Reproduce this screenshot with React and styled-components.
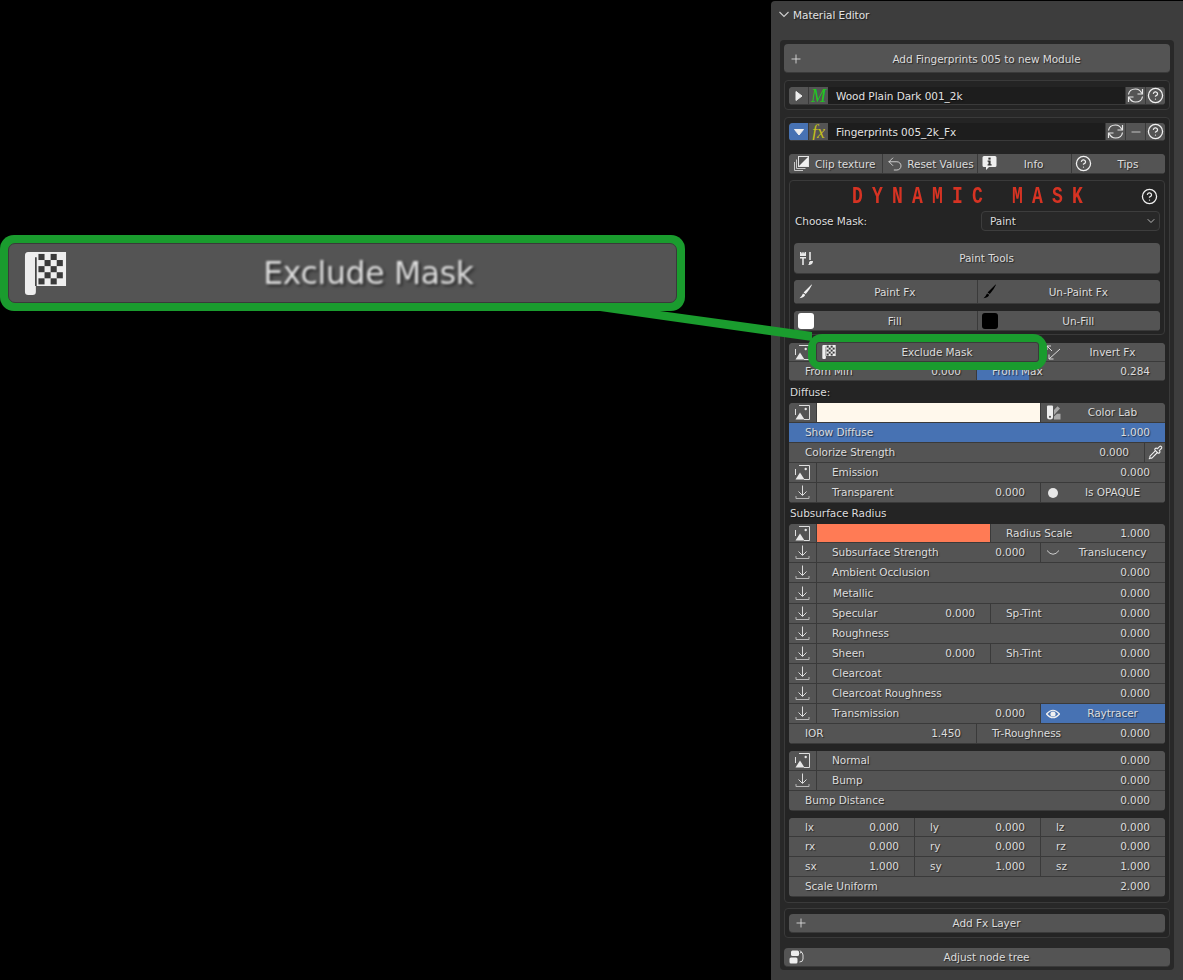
import React from "react";
import styled, { createGlobalStyle } from "styled-components";
import { ChevronDown, CircleHelp, Undo2, Pipette, Plus, Minus } from "lucide-react";

const GlobalStyle = createGlobalStyle`
  html, body {
    margin: 0;
    background: #000;
    height: 980px;
    overflow: hidden;
  }
  * { box-sizing: border-box; }
`;

const Page = styled.div`
  position: relative;
  display: flex;
  justify-content: flex-end;
  width: 1183px;
  height: 980px;
  background: #000;
  font-family: "DejaVu Sans", "Noto Sans", sans-serif;
  font-size: 10.5px;
  letter-spacing: -0.05px;
  color: #dcdcdc;
  text-shadow: 1px 1px 1px rgba(0, 0, 0, 0.55);
`;

const Panel = styled.div`
  width: 412px;
  height: 980px;
  margin-top: 1px;
  background: #3d3d3d;
  border-radius: 4px 0 0 0;
`;

const PanelHeader = styled.div`
  display: flex;
  align-items: center;
  height: 39px;
  padding: 0 6px 11px 8px;
  color: #e2e2e2;
`;

const Grip = styled.div`
  margin: -4px 0 0 auto;
  width: 11px;
  height: 5px;
  background-image: radial-gradient(circle, #858585 0.5px, transparent 0.6px);
  background-size: 2px 2px;
`;

const Inner = styled.div`
  margin: 0 9px;
  height: 930px;
  padding: 4px;
  background: #282828;
  border-radius: 4px;
`;

const Box = styled.div`
  margin-top: ${(p) => p.$top}px;
  padding: ${(p) => p.$pad || "5px 4px"};
  border: 1px solid #3a3a3a;
  border-radius: 4px;
  background: #242424;
`;

const Group = styled.div`
  margin-top: ${(p) => p.$top || 0}px;
  border-radius: 4px;
  overflow: hidden;
`;

/* 20px rows sit their text a pixel higher than a plain centre would */
const Row = styled.div`
  --lift: ${(p) => ((p.$h || 20) === 20 && !p.$flat ? 1 : 0)}px;
  display: flex;
  height: ${(p) => p.$h || 20}px;
  background: #545454;
  border-bottom: 1px solid #3a3a3a;
`;

const Cell = styled.div`
  flex: ${(p) => (p.$w ? `0 0 ${p.$w}px` : "1 1 0")};
  display: flex;
  align-items: center;
  justify-content: space-between;
  min-width: 0;
  padding: 0 15px var(--lift, 0) ${(p) => p.$pad || 15}px;
  white-space: nowrap;
  background: ${(p) =>
    p.$fill
      ? `linear-gradient(to right, #4772b3 ${p.$fill}px, #545454 ${p.$fill}px)`
      : p.$on
      ? "#4772b3"
      : "#545454"};
  border-left: 1px solid #3a3a3a;
  &:first-child {
    border-left: 0;
  }
`;

const IconCell = styled.div`
  flex: 0 0 ${(p) => p.$w || 27}px;
  display: flex;
  align-items: center;
  justify-content: center;
  overflow: hidden;
  background: ${(p) => (p.$on ? "#4772b3" : "#545454")};
  border-left: 1px solid #3a3a3a;
  color: #e6e6e6;
  &:first-child {
    border-left: 0;
  }
`;

const Swatch = styled.div`
  flex: 0 0 ${(p) => p.$w}px;
  background: ${(p) => p.$color};
  border-left: 1px solid #3a3a3a;
`;

const Slot = styled.span`
  flex: 0 0 24px;
  display: flex;
  align-items: center;
  justify-content: center;
  color: #e6e6e6;
`;

const Label = styled.span`
  flex: 1;
  margin-bottom: var(--lift, 0);
  text-align: center;
  padding-right: 5px;
  white-space: nowrap;
`;

const ToolCell = styled.div`
  flex: 1 1 0;
  display: flex;
  align-items: center;
  min-width: 0;
  background: ${(p) => (p.$on ? "#4772b3" : "#545454")};
  border-left: 1px solid #3a3a3a;
  &:first-child {
    border-left: 0;
  }
`;

const Wide = styled.div`
  display: flex;
  align-items: center;
  height: ${(p) => p.$h || 19}px;
  margin-top: ${(p) => p.$top || 0}px;
  background: #545454;
  border-bottom: 1px solid #3a3a3a;
  border-radius: 4px;
`;

const TopButton = styled(Wide)`
  padding-top: 1px;
`;

const NameField = styled.div`
  flex: 1;
  display: flex;
  align-items: center;
  padding-left: 8px;
  background: #1d1d1d;
  color: #e2e2e2;
`;

const Script = styled.span`
  font-family: "Liberation Serif", serif;
  font-style: italic;
  font-size: ${(p) => p.$size}px;
  letter-spacing: 0;
  line-height: 1;
  color: ${(p) => p.$color};
  text-shadow: none;
`;

const MaskBox = styled.div`
  margin-top: 6px;
  height: 155px;
  padding: 0 4px;
  border: 1px solid #3a3a3a;
  border-radius: 4px;
  background: #242424;
`;

const TitleRow = styled.div`
  position: relative;
  display: flex;
  align-items: center;
  height: 30px;
`;

const Title = styled.span`
  display: inline-block;
  margin-left: 58px;
  font-family: "Liberation Mono", monospace;
  font-weight: 700;
  font-size: 24px;
  letter-spacing: 12.27px;
  white-space: pre;
  color: #d63323;
  text-shadow: none;
  transform: scaleX(0.75);
  transform-origin: left center;
`;

const TitleHelp = styled.span`
  position: absolute;
  right: 2px;
  top: 7px;
  display: flex;
`;

const ChooseRow = styled.div`
  display: flex;
  align-items: center;
  justify-content: space-between;
  height: 20px;
  padding-left: 1px;
`;

const Select = styled.div`
  display: flex;
  align-items: center;
  justify-content: space-between;
  width: 179px;
  height: 20px;
  padding: 0 2px 0 8px;
  background: #282828;
  border: 1px solid #3d3d3d;
  border-radius: 4px;
`;

const SectionLabel = styled.div`
  display: flex;
  align-items: center;
  height: ${(p) => p.$h}px;
  padding: 0 0 ${(p) => p.$lift || 0}px 1px;
`;

const FillSquare = styled.span`
  width: 16px;
  height: 16px;
  border-radius: 3px;
  background: ${(p) => p.$color};
`;

const Dot = styled.span`
  width: 10px;
  height: 10px;
  border-radius: 50%;
  background: #e6e6e6;
`;

const Overlay = styled.svg`
  position: absolute;
  left: 0;
  top: 0;
  pointer-events: none;
`;

const Callout = styled.div`
  position: absolute;
  left: ${(p) => p.$x}px;
  top: ${(p) => p.$y}px;
  width: ${(p) => p.$w}px;
  height: ${(p) => p.$h}px;
  padding: ${(p) => p.$edge}px;
  background: #1a9c2e;
  border-radius: ${(p) => p.$edge + 6}px;
`;

const MaskButton = styled.div`
  display: flex;
  align-items: center;
  height: 100%;
  background: #545454;
  border: 1px solid #3a3a3a;
  border-radius: ${(p) => (p.$big ? 7 : 3)}px;
`;

const BigSlot = styled.span`
  flex: 0 0 72px;
  display: flex;
  justify-content: center;
  filter: blur(0.7px);
`;

const BigLabel = styled.span`
  flex: 1;
  margin-left: -20px;
  text-align: center;
  font-size: 31.5px;
  letter-spacing: -0.35px;
  color: #dedede;
  filter: blur(0.8px);
  text-shadow: 2px 2px 3px rgba(0, 0, 0, 0.6);
`;

const CollapseIcon = () => (
  <svg width="14" height="8" viewBox="0 0 14 8" fill="none" stroke="#cfcfcf" strokeWidth="1.1">
    <path d="M0.5 1 L5 5.5 L9.5 1" />
  </svg>
);

const Triangle = ({ down }) => (
  <svg width="10" height="10" viewBox="0 0 10 10">
    <path
      d={down ? "M0.5 2.5 H9.5 L5 8 Z" : "M2 0.5 V9.5 L8 5 Z"}
      fill="#eeeeee"
      stroke="#eeeeee"
      strokeLinejoin="round"
    />
  </svg>
);

const RefreshIcon = () => (
  <svg width="17" height="17" viewBox="0 0 17 17" fill="none" stroke="#e8e8e8" strokeWidth="1.2">
    <path d="M1.5 7.5 C2 4 5 2 8.5 2 C11 2 13.5 3.5 14.8 6.5" />
    <path d="M15.5 2 V7 H10.5" />
    <path d="M15.5 9.5 C15 13 12 15 8.5 15 C6 15 3.5 13.5 2.2 10.5" />
    <path d="M1.5 15 V10 H6.5" />
  </svg>
);

const ImageIcon = () => (
  <svg width="15" height="15" viewBox="0 0 15 15" fill="none">
    <path d="M4 0.5 H14.5 V14.5 H9" stroke="#dedede" />
    <path d="M0.5 4 V10" stroke="#dedede" />
    <path d="M0.5 14.5 L5 7.5 L9.5 14.5 Z" fill="#e8e8e8" />
    <circle cx="10.7" cy="4" r="1.2" fill="#e8e8e8" />
  </svg>
);

const ImportIcon = () => (
  <svg width="15" height="15" viewBox="0 0 15 15" fill="none" stroke="#dcdcdc">
    <path d="M7.5 0.5 V10 M3.5 6.5 L7.5 10.5 L11.5 6.5" />
    <path d="M1 11 V13.5 H14 V11" stroke="#b8b8b8" />
  </svg>
);

const ClipIcon = () => (
  <svg width="15" height="15" viewBox="0 0 15 15" fill="none">
    <rect x="4.5" y="0.5" width="10" height="10" fill="#545454" stroke="#e4e4e4" />
    <path d="M5 10 L14 1 V10 Z" fill="#f0f0f0" />
    <path d="M2.5 3.5 V12.5 H11.5 M0.5 6 V14.5 H9" stroke="#c8c8c8" />
  </svg>
);

const InfoIcon = () => (
  <svg width="15" height="17" viewBox="0 0 15 17">
    <path d="M2 1 H13 Q14.5 1 14.5 2.5 V10.5 Q14.5 12 13 12 H7 L4 15 V12 H2 Q0.5 12 0.5 10.5 V2.5 Q0.5 1 2 1 Z" fill="#eeeeee" />
    <rect x="6.4" y="2.6" width="2.2" height="2" fill="#333" />
    <path d="M5.6 5.6 H8.6 V9.2 H9.6 V10.4 H5.6 V9.2 H6.5 V6.8 H5.6 Z" fill="#333" />
  </svg>
);

const ToolsIcon = () => (
  <svg width="15" height="15" viewBox="0 0 15 15" fill="#e8e8e8">
    <path d="M1 1 H2.4 V2.2 H3.4 V1 H4.6 V2.2 H5.6 V1 H7 V5 H1 Z" />
    <path d="M1 6 H7 V7.4 H4.8 V14 H3.2 V7.4 H1 Z" />
    <rect x="10.2" y="1" width="1.6" height="8" />
    <path d="M11 10 H14 Q14 13.5 10.5 14 H9 Q10.5 13 10 11.5 Z" />
  </svg>
);

const BrushIcon = ({ color }) => (
  <svg width="14" height="15" viewBox="0 0 14 15" fill={color}>
    <path d="M12.6 0.5 L13 0.8 Q11 5.5 6.8 10 L4.6 8.6 Q9 4 12.6 0.5 Z" />
    <path d="M4 9.4 L6.2 10.8 Q5.5 13.5 0.5 14.2 Q2.8 12.4 4 9.4 Z" />
  </svg>
);

const InvertIcon = () => (
  <svg width="15" height="15" viewBox="0 0 15 15" fill="none" stroke="#dcdcdc">
    <path d="M1 5 V1 H5 M1 1 L6 6" />
    <path d="M14 4 L3 14 M3 9.5 V14 H7.5" />
  </svg>
);

const ColorLabIcon = () => (
  <svg width="15" height="15" viewBox="0 0 15 15">
    <path d="M8 5 L11.5 1.2 L14 3.6 L8 10 Z" fill="#a8a8a8" />
    <path d="M8 14.5 V11.5 L11 8.8 H14.5 V14.5 Z" fill="#a8a8a8" />
    <path d="M1 1.5 Q1 0.5 2 0.5 H6 Q7 0.5 7 1.5 V12 Q7 14.5 4 14.5 Q1 14.5 1 12 Z" fill="#eeeeee" />
    <circle cx="4" cy="11.8" r="1.1" fill="#545454" />
  </svg>
);

const ArcIcon = () => (
  <svg width="14" height="8" viewBox="0 0 14 8" fill="none" stroke="#cfcfcf">
    <path d="M1 1.5 Q7 9 13 1.5" />
  </svg>
);

const EyeIcon = () => (
  <svg width="14" height="10" viewBox="0 0 14 10">
    <path d="M0.5 5 Q7 -2.5 13.5 5 Q7 12.5 0.5 5 Z" fill="none" stroke="#f0f0f0" strokeWidth="1.2" />
    <circle cx="7" cy="5" r="2.6" fill="#f0f0f0" />
  </svg>
);

const NodeTreeIcon = () => (
  <svg width="15" height="14" viewBox="0 0 15 14" fill="none">
    <rect x="2" y="0.5" width="8" height="5.5" rx="1.5" fill="#eeeeee" />
    <rect x="0.5" y="7.5" width="8" height="6" rx="1.5" fill="#eeeeee" />
    <path d="M11 2 Q14 2 14 5 V9 Q14 12 10.5 12" stroke="#dcdcdc" />
    <path d="M11 0.5 L12.5 2 L11 3.5" stroke="#dcdcdc" />
  </svg>
);

const checker = [];
for (let y = 0; y < 5; y++) {
  for (let x = 0; x < 4; x++) {
    if ((x + y) % 2 === 0) checker.push([5.2 + x * 1.9, 1 + y * 1.9]);
  }
}

const ExcludeIcon = ({ size }) => (
  <svg width={size} height={size} viewBox="1 0.4 12.8 13.4">
    <path d="M1 1.5 Q1 0.4 2 0.4 H13.8 V11 H4.4 V12.8 Q4.4 13.8 3.4 13.8 H2 Q1 13.8 1 12.8 Z" fill="#eeeeee" />
    <path d="M4.4 2 V11" stroke="#3a3a3a" strokeWidth="0.5" />
    {checker.map(([x, y]) => (
      <rect key={`${x}-${y}`} x={x} y={y} width="1.9" height="1.9" fill="#3a3a3a" />
    ))}
  </svg>
);

const Help = () => <CircleHelp size={17} strokeWidth={1.8} color="#f0f0f0" />;

const Pair = ({ label, value, ...rest }) => (
  <Cell {...rest}>
    <span>{label}</span>
    <span>{value}</span>
  </Cell>
);

const Tool = ({ icon, children, ...rest }) => (
  <ToolCell {...rest}>
    <Slot>{icon}</Slot>
    <Label>{children}</Label>
  </ToolCell>
);

const ChannelRow = ({ icon, label, value, pad, h, flat }) => (
  <Row $h={h} $flat={flat}>
    <IconCell>{icon}</IconCell>
    <Pair label={label} value={value} $pad={pad} />
  </Row>
);

const SplitRow = ({ label, value, tint, tintValue }) => (
  <Row>
    <IconCell>
      <ImportIcon />
    </IconCell>
    <Pair $w={174} label={label} value={value} />
    <Pair label={tint} value={tintValue} />
  </Row>
);

const TransformRow = ({ h, values }) => (
  <Row $h={h}>
    {values.map(([label, value], i) => (
      <Pair key={label} $w={i === 2 ? undefined : i === 0 ? 125 : 126} $pad={i === 0 ? 16 : 15} label={label} value={value} />
    ))}
  </Row>
);

export default function App() {
  return (
    <Page>
      <GlobalStyle />
      <Panel>
        <PanelHeader>
          <CollapseIcon />
          <span>Material Editor</span>
          <Grip />
        </PanelHeader>
        <Inner>
          <TopButton $h={29}>
            <Slot>
              <Plus size={14} strokeWidth={1.4} />
            </Slot>
            <Label>Add Fingerprints 005 to new Module</Label>
          </TopButton>

          <Box $top={7} $pad="6px 4px 4px">
            <Group>
              <Row $h={18}>
                <IconCell $w={19}>
                  <Triangle />
                </IconCell>
                <IconCell $w={20}>
                  <Script $size={18} $color="#1fc71f">M</Script>
                </IconCell>
                <NameField>Wood Plain Dark 001_2k</NameField>
                <IconCell $w={20}>
                  <RefreshIcon />
                </IconCell>
                <IconCell $w={20}>
                  <Help />
                </IconCell>
              </Row>
            </Group>
          </Box>

          <Box $top={7}>
            <Group>
              <Row $h={18}>
                <IconCell $w={19} $on>
                  <Triangle down />
                </IconCell>
                <IconCell $w={20}>
                  <Script $size={18} $color="#c4bf1a">fx</Script>
                </IconCell>
                <NameField>Fingerprints 005_2k_Fx</NameField>
                <IconCell $w={20}>
                  <RefreshIcon />
                </IconCell>
                <IconCell $w={20}>
                  <Minus size={14} strokeWidth={1.3} />
                </IconCell>
                <IconCell $w={20}>
                  <Help />
                </IconCell>
              </Row>
            </Group>

            <Group $top={13}>
              <Row $h={20} $flat>
                <Tool icon={<ClipIcon />}>Clip texture</Tool>
                <Tool icon={<Undo2 size={18} strokeWidth={1.1} />}>Reset Values</Tool>
                <Tool icon={<InfoIcon />}>Info</Tool>
                <Tool icon={<Help />}>Tips</Tool>
              </Row>
            </Group>

            <MaskBox>
              <TitleRow>
                <Title>DYNAMIC MASK</Title>
                <TitleHelp>
                  <Help />
                </TitleHelp>
              </TitleRow>
              <ChooseRow>
                <span>Choose Mask:</span>
                <Select>
                  <span>Paint</span>
                  <ChevronDown size={12} strokeWidth={1.6} />
                </Select>
              </ChooseRow>
              <Wide $h={31} $top={12}>
                <Slot>
                  <ToolsIcon />
                </Slot>
                <Label>Paint Tools</Label>
              </Wide>
              <Group $top={6}>
                <Row $h={24}>
                  <Tool icon={<BrushIcon color="#f2f2f2" />}>Paint Fx</Tool>
                  <Tool icon={<BrushIcon color="#000" />}>Un-Paint Fx</Tool>
                </Row>
              </Group>
              <Group $top={7}>
                <Row $h={20} $flat>
                  <Tool icon={<FillSquare $color="#fff" />}>Fill</Tool>
                  <Tool icon={<FillSquare $color="#000" />}>Un-Fill</Tool>
                </Row>
              </Group>
            </MaskBox>

            <Group $top={8}>
              <Row $h={19}>
                <IconCell>
                  <ImageIcon />
                </IconCell>
                <Cell $w={224} />
                <Tool icon={<InvertIcon />}>Invert Fx</Tool>
              </Row>
              <Row $h={19}>
                <Pair $w={187} $pad={16} label="From Min" value="0.000" />
                <Pair $fill={52} label="From Max" value="0.284" />
              </Row>
            </Group>

            <SectionLabel $h={22}>Diffuse:</SectionLabel>
            <Group>
              <Row>
                <IconCell>
                  <ImageIcon />
                </IconCell>
                <Swatch $w={224} $color="#fff8ec" />
                <Tool icon={<ColorLabIcon />}>Color Lab</Tool>
              </Row>
              <Row>
                <Pair $on $pad={16} label="Show Diffuse" value="1.000" />
              </Row>
              <Row>
                <Pair $w={355} $pad={16} label="Colorize Strength" value="0.000" />
                <IconCell $w={21}>
                  <Pipette size={15} strokeWidth={1.7} color="#eeeeee" />
                </IconCell>
              </Row>
              <ChannelRow icon={<ImageIcon />} label="Emission" value="0.000" />
              <Row>
                <IconCell>
                  <ImportIcon />
                </IconCell>
                <Pair $w={224} label="Transparent" value="0.000" />
                <Tool icon={<Dot />}>Is OPAQUE</Tool>
              </Row>
            </Group>

            <SectionLabel $h={21} $lift={2}>Subsurface Radius</SectionLabel>
            <Group>
              <Row $h={19}>
                <IconCell>
                  <ImageIcon />
                </IconCell>
                <Swatch $w={174} $color="#ff7b55" />
                <Pair label="Radius Scale" value="1.000" />
              </Row>
              <Row>
                <IconCell>
                  <ImportIcon />
                </IconCell>
                <Pair $w={224} label="Subsurface Strength" value="0.000" />
                <Tool icon={<ArcIcon />}>Translucency</Tool>
              </Row>
              <ChannelRow icon={<ImportIcon />} label="Ambient Occlusion" value="0.000" />
              <ChannelRow icon={<ImportIcon />} label="Metallic" value="0.000" pad={16} h={21} />
              <SplitRow label="Specular" value="0.000" tint="Sp-Tint" tintValue="0.000" />
              <ChannelRow icon={<ImportIcon />} label="Roughness" value="0.000" />
              <SplitRow label="Sheen" value="0.000" tint="Sh-Tint" tintValue="0.000" />
              <ChannelRow icon={<ImportIcon />} label="Clearcoat" value="0.000" />
              <ChannelRow icon={<ImportIcon />} label="Clearcoat Roughness" value="0.000" />
              <Row>
                <IconCell>
                  <ImportIcon />
                </IconCell>
                <Pair $w={224} label="Transmission" value="0.000" />
                <Tool $on icon={<EyeIcon />}>Raytracer</Tool>
              </Row>
              <Row>
                <Pair $w={187} $pad={16} label="IOR" value="1.450" />
                <Pair label="Tr-Roughness" value="0.000" />
              </Row>
            </Group>

            <Group $top={7}>
              <ChannelRow icon={<ImageIcon />} label="Normal" value="0.000" />
              <ChannelRow icon={<ImportIcon />} label="Bump" value="0.000" />
              <Row>
                <Pair $pad={16} label="Bump Distance" value="0.000" />
              </Row>
            </Group>

            <Group $top={7}>
              <TransformRow h={19} values={[["lx", "0.000"], ["ly", "0.000"], ["lz", "0.000"]]} />
              <TransformRow values={[["rx", "0.000"], ["ry", "0.000"], ["rz", "0.000"]]} />
              <TransformRow values={[["sx", "1.000"], ["sy", "1.000"], ["sz", "1.000"]]} />
              <Row>
                <Pair $pad={16} label="Scale Uniform" value="2.000" />
              </Row>
            </Group>
          </Box>

          <Box $top={5} $pad="5px 4px 4px">
            <Wide>
              <Slot>
                <Plus size={14} strokeWidth={1.4} />
              </Slot>
              <Label>Add Fx Layer</Label>
            </Wide>
          </Box>

          <Wide $top={10}>
            <Slot>
              <NodeTreeIcon />
            </Slot>
            <Label>Adjust node tree</Label>
          </Wide>
        </Inner>
      </Panel>

      <Overlay width="1183" height="980">
        <polygon points="593,310 660,311 812,332 812,341" fill="#1a9c2e" />
      </Overlay>

      <Callout $x={808} $y={334} $w={239} $h={36} $edge={8}>
        <MaskButton>
          <Slot>
            <ExcludeIcon size={14} />
          </Slot>
          <Label>Exclude Mask</Label>
        </MaskButton>
      </Callout>

      <Callout $x={0} $y={235} $w={685} $h={76} $edge={8}>
        <MaskButton $big>
          <BigSlot>
            <ExcludeIcon size={43} />
          </BigSlot>
          <BigLabel>Exclude Mask</BigLabel>
        </MaskButton>
      </Callout>
    </Page>
  );
}
